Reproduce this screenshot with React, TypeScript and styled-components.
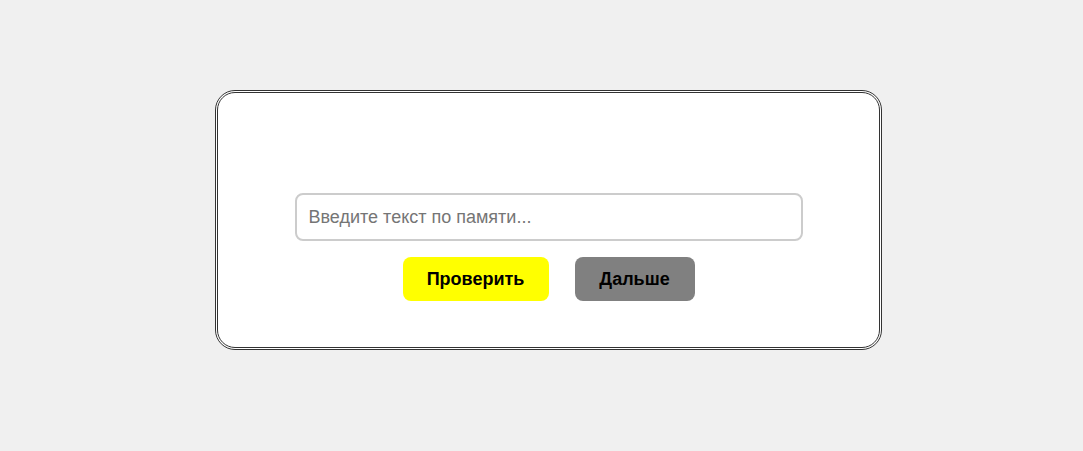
import React, { useState } from 'react';
import styled, { createGlobalStyle } from 'styled-components';

const GlobalStyle = createGlobalStyle`
  html, body {
    margin: 0;
    padding: 0;
    background: #f0f0f0;
    font-family: "Liberation Sans", Arial, sans-serif;
  }
`;

const App: React.FC = () => {
  const [text, setText] = useState('');

  return (
    <Page>
      <GlobalStyle />
      <Card>
        <Field
          type="text"
          placeholder="Введите текст по памяти..."
          value={text}
          onChange={(e) => setText(e.target.value)}
        />
        <Actions>
          <ActionButton $bg="#ffff00" $width={146}>Проверить</ActionButton>
          <ActionButton $bg="#808080" $width={120}>Дальше</ActionButton>
        </Actions>
      </Card>
    </Page>
  );
};

export default App;

const Page = styled.div`
  width: 1083px;
  height: 451px;
  padding: 90px 0 0 215px;
  box-sizing: border-box;
`;

const Card = styled.div`
  box-sizing: border-box;
  width: 667px;
  height: 260px;
  padding-top: 100px;
  background: #fff;
  border: 3px double #333;
  border-radius: 20px;
  display: flex;
  flex-direction: column;
  align-items: center;
  gap: 16px;
`;

const Field = styled.input`
  box-sizing: border-box;
  width: 508px;
  height: 48px;
  padding: 0 12px;
  border: 2px solid #ccc;
  border-radius: 8px;
  font-family: "Liberation Sans", Arial, sans-serif;
  font-size: 18px;
  color: #333;
  outline: none;

  &::placeholder {
    color: #757575;
  }
`;

const Actions = styled.div`
  display: flex;
  gap: 26px;
`;

const ActionButton = styled.button<{ $bg: string; $width: number }>`
  box-sizing: border-box;
  width: ${(p) => p.$width}px;
  height: 44px;
  border: none;
  border-radius: 8px;
  background: ${(p) => p.$bg};
  color: #000;
  font-family: "Liberation Sans", Arial, sans-serif;
  font-size: 18px;
  font-weight: bold;
  cursor: pointer;
`;
